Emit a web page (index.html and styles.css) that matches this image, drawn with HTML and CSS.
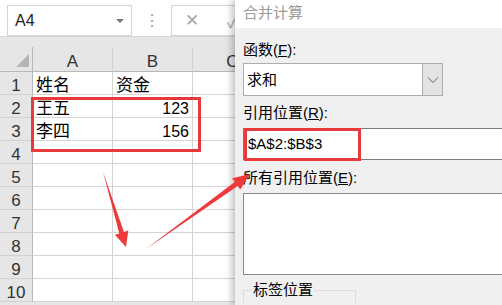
FILE: index.html
```html
<!DOCTYPE html>
<html lang="zh-CN">
<head>
    <meta charset="UTF-8">
    <title>合并计算</title>
    <link rel="stylesheet" href="styles.css">
</head>
<body>
    <div class="app">
        <div class="formula-bar">
            <div class="name-box">
                <span>A4</span>
                <span class="caret"></span>
            </div>
            <div class="grip">⋮</div>
            <div class="fx-box">
                <span class="cancel">✕</span>
                <span class="enter">✓</span>
            </div>
        </div>

        <div class="sheet">
            <div class="corner"><span class="tri"></span></div>
            <div class="col-head">A</div>
            <div class="col-head">B</div>
            <div class="col-head">C</div>

            <div class="row-head">1</div>
            <div class="cell">姓名</div>
            <div class="cell">资金</div>
            <div class="cell"></div>

            <div class="row-head">2</div>
            <div class="cell">王五</div>
            <div class="cell num">123</div>
            <div class="cell"></div>

            <div class="row-head">3</div>
            <div class="cell">李四</div>
            <div class="cell num">156</div>
            <div class="cell"></div>

            <div class="row-head">4</div><div class="cell"></div><div class="cell"></div><div class="cell"></div>
            <div class="row-head">5</div><div class="cell"></div><div class="cell"></div><div class="cell"></div>
            <div class="row-head">6</div><div class="cell"></div><div class="cell"></div><div class="cell"></div>
            <div class="row-head">7</div><div class="cell"></div><div class="cell"></div><div class="cell"></div>
            <div class="row-head">8</div><div class="cell"></div><div class="cell"></div><div class="cell"></div>
            <div class="row-head">9</div><div class="cell"></div><div class="cell"></div><div class="cell"></div>
            <div class="row-head">10</div><div class="cell"></div><div class="cell"></div><div class="cell"></div>

            <div class="mark sheet-mark"></div>
        </div>
    </div>

    <div class="dialog">
        <div class="dialog-title">合并计算</div>
        <div class="dialog-body">
            <label class="field-label">函数(<u>F</u>):</label>
            <div class="select">
                <span class="select-value">求和</span>
                <span class="select-btn">
                    <svg width="12" height="8" viewBox="0 0 12 8"><path d="M1 1.5 L6 6.5 L11 1.5" fill="none" stroke="#606060" stroke-width="1"/></svg>
                </span>
            </div>

            <label class="field-label">引用位置(<u>R</u>):</label>
            <div class="input">
                <span>$A$2:$B$3</span>
                <div class="mark input-mark"></div>
            </div>

            <label class="field-label">所有引用位置(<u>E</u>):</label>
            <div class="list"></div>

            <div class="group">
                <span class="group-title">标签位置</span>
            </div>
        </div>
    </div>

    <svg class="arrows" width="502" height="305" viewBox="0 0 502 305">
        <polygon points="103,172 119.3,233.4 114.9,234.8 126,247 128.3,230.6 124,232" fill="#ee3a3a"/>
        <polygon points="146,249 234.7,181.9 232.1,178.2 250,174 240.3,189.6 237.7,185.9" fill="#ee3a3a"/>
    </svg>
</body>
</html>
```

FILE: styles.css
```css
body {
    margin: 0;
    width: 502px;
    height: 305px;
    overflow: hidden;
    position: relative;
    background-color: #e6e6e6;
    font-family: "Liberation Sans", "Noto Sans CJK SC", sans-serif;
    color: #000;
}
.app {
    display: flex;
    flex-direction: column;
    height: 305px;
    overflow: hidden;
}
.formula-bar {
    height: 37px;
    flex-shrink: 0;
    background-color: #fff;
    display: flex;
    align-items: flex-start;
    padding-top: 5px;
    box-sizing: border-box;
    border-bottom: 1px solid #d6d6d6;
}
.name-box {
    margin-left: 7px;
    width: 125px;
    height: 31px;
    box-sizing: border-box;
    border: 1px solid #d4d4d4;
    display: flex;
    align-items: center;
    justify-content: space-between;
    padding: 0 7px 0 7px;
    font-size: 16px;
    color: #222;
}
.caret {
    width: 0;
    height: 0;
    border-left: 4px solid transparent;
    border-right: 4px solid transparent;
    border-top: 4px solid #777;
}
.grip {
    width: 39px;
    text-align: center;
    color: #a0a0a0;
    font-size: 16px;
    line-height: 31px;
}
.fx-box {
    width: 200px;
    height: 31px;
    box-sizing: border-box;
    border: 1px solid #d4d4d4;
    display: flex;
    align-items: center;
    color: #a8a8a8;
    font-size: 17px;
}
.cancel {
    margin-left: 13px;
}
.enter {
    margin-left: 28px;
}
.sheet {
    position: relative;
    margin-top: 10px;
    display: grid;
    grid-template-columns: 33px 80px 80px 80px;
    grid-template-rows: 25px;
    grid-auto-rows: 23px;
}
.corner {
    position: relative;
    border-right: 1px solid #b8b8b8;
    border-bottom: 1px solid #b8b8b8;
}
.tri {
    position: absolute;
    right: 3px;
    bottom: 4px;
    width: 0;
    height: 0;
    border-left: 13px solid transparent;
    border-bottom: 13px solid #b5b5b5;
}
.col-head {
    border-right: 1px solid #d0d0d0;
    border-bottom: 1px solid #b8b8b8;
    text-align: center;
    font-size: 17px;
    line-height: 30px;
    color: #333;
}
.row-head {
    border-right: 1px solid #b8b8b8;
    border-bottom: 1px solid #d0d0d0;
    text-align: center;
    font-size: 17px;
    line-height: 27px;
    color: #333;
}
.cell {
    background-color: #fff;
    border-right: 1px solid #d4d4d4;
    border-bottom: 1px solid #d4d4d4;
    font-size: 17px;
    line-height: 27px;
    padding: 0 3px;
    overflow: visible;
}
.num {
    text-align: right;
    font-size: 16px;
}
.mark {
    position: absolute;
    box-sizing: border-box;
    border: 3px solid #e8393c;
}
.sheet-mark {
    left: 31px;
    top: 50px;
    width: 170px;
    height: 55px;
}
.dialog {
    position: absolute;
    left: 235px;
    top: 0;
    width: 280px;
    height: 305px;
    overflow: hidden;
    background-color: #f0f0f0;
    box-shadow: -3px 0 7px rgba(0, 0, 0, 0.25);
}
.dialog-title {
    height: 28px;
    background-color: #fff;
    color: #9a9a9a;
    font-size: 15px;
    line-height: 26px;
    padding-left: 8px;
}
.dialog-body {
    padding: 12px 0 0 8px;
    display: flex;
    flex-direction: column;
    align-items: flex-start;
}
.field-label {
    font-size: 15px;
    line-height: 20px;
    color: #000;
}
.field-label u {
    text-decoration-thickness: 1px;
}
.select {
    margin-top: 3px;
    width: 200px;
    height: 33px;
    box-sizing: border-box;
    border: 1px solid #adadad;
    background-color: #fff;
    display: flex;
    margin-bottom: 7px;
}
.select-value {
    flex: 1;
    font-size: 15px;
    line-height: 31px;
    padding-left: 3px;
}
.select-btn {
    width: 19px;
    background-color: #e3e3e3;
    border-left: 1px solid #adadad;
    display: flex;
    align-items: center;
    justify-content: center;
}
.input {
    position: relative;
    margin-top: 5px;
    width: 270px;
    height: 32px;
    box-sizing: border-box;
    border: 1px solid #7a7a7a;
    border-right: none;
    background-color: #fff;
    font-size: 15px;
    line-height: 30px;
    padding-left: 4px;
    margin-bottom: 8px;
}
.input-mark {
    left: 0;
    top: -1px;
    width: 117px;
    height: 33px;
}
.list {
    margin-top: 5px;
    width: 270px;
    height: 82px;
    box-sizing: border-box;
    border: 1px solid #8a8a8a;
    border-right: none;
    background-color: #fff;
}
.group {
    margin-top: 15px;
    width: 111px;
    height: 12px;
    border-top: 1px solid #dcdcdc;
    border-left: 1px solid #dcdcdc;
    border-right: 1px solid #dcdcdc;
    position: relative;
}
.group-title {
    position: absolute;
    left: 8px;
    top: -11px;
    font-size: 15px;
    line-height: 20px;
    background-color: #f0f0f0;
    padding: 0 1px;
}
.arrows {
    position: absolute;
    left: 0;
    top: 0;
    pointer-events: none;
}
```
